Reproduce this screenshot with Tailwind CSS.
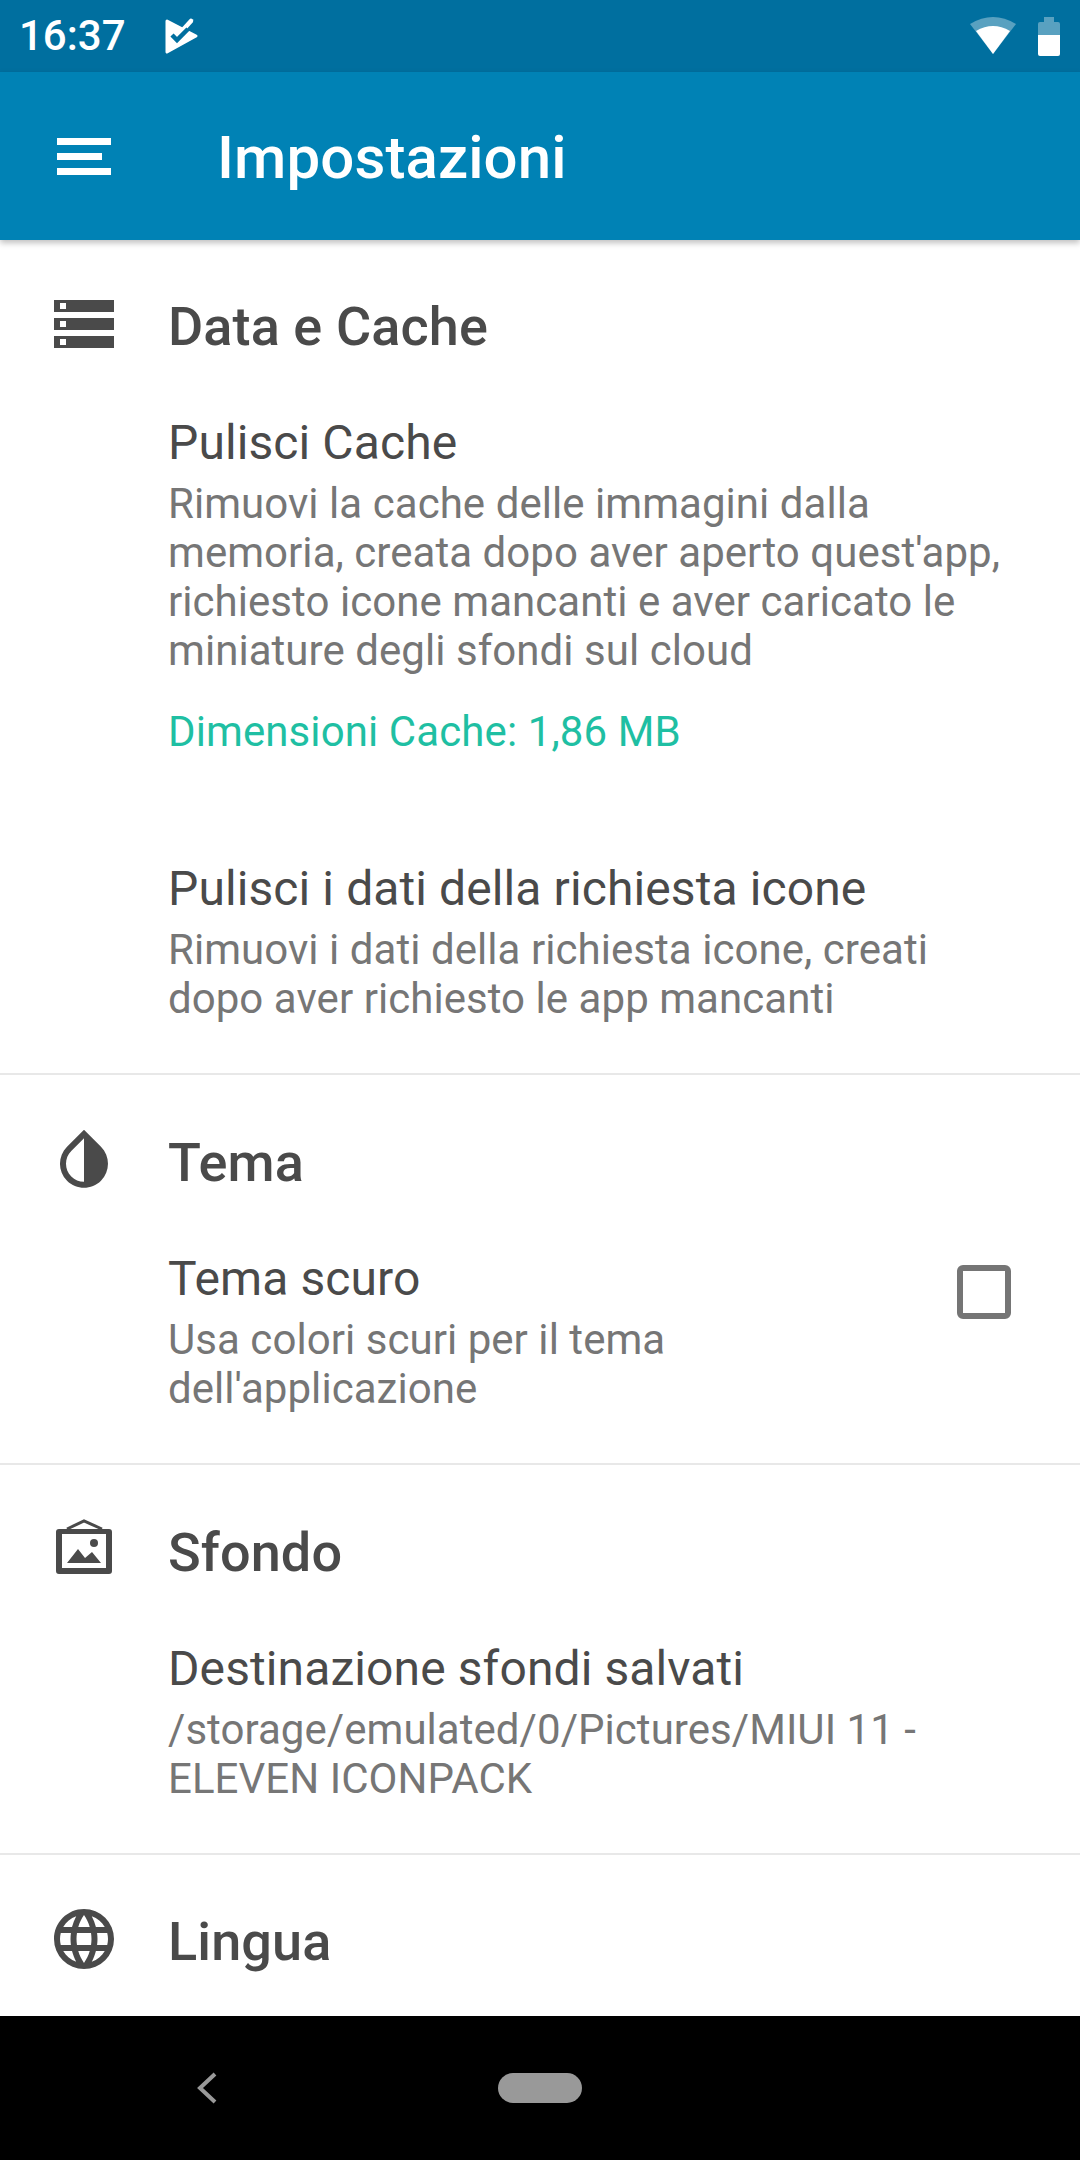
<!DOCTYPE html>
<html lang="it">

<head>
    <meta charset="UTF-8">
    <meta name="viewport" content="width=device-width, initial-scale=1.0">
    <title>Impostazioni</title>
    <script src="https://cdn.jsdelivr.net/npm/@tailwindcss/browser@4"></script>
</head>

<body class="bg-white font-['Roboto',sans-serif]">
    <div class="w-[1080px] h-[2160px] flex flex-col overflow-hidden">
        <!-- status bar -->
        <div class="h-[72px] shrink-0 bg-[#006f9f] flex items-center text-white relative">
            <span class="ml-[19px] text-[42px] leading-none font-medium">16:37</span>
            <svg class="ml-[37px]" width="36" height="40" viewBox="0 0 36 40">
                <path d="M4 5 L33 20 L4 36 Z" fill="#fff" stroke="#fff" stroke-width="3" stroke-linejoin="round" />
                <path d="M28 5 L18 16" fill="none" stroke="#fff" stroke-width="4.5" stroke-linecap="round" />
                <path d="M9 19 L14 24 L25 13" fill="none" stroke="#006f9f" stroke-width="4.5" />
            </svg>
            <svg class="ml-auto mr-[21px]" width="48" height="40" viewBox="0 0 48 40">
                <path d="M1 8 Q24 -6 47 8 L24 38 Z" fill="#fff" fill-opacity="0.35" />
                <path d="M7 15 Q24 5 41 15 L24 38 Z" fill="#fff" />
            </svg>
            <div class="mr-[20px] w-[22px] h-[39px] flex flex-col items-center">
                <div class="w-[10px] h-[5px] bg-white/35 shrink-0"></div>
                <div class="w-full h-[13px] bg-white/35 rounded-t-[2px] shrink-0"></div>
                <div class="w-full h-[21px] bg-white rounded-b-[2px] shrink-0"></div>
            </div>
        </div>

        <!-- app bar -->
        <div class="h-[168px] shrink-0 bg-[#0082b5] flex items-center text-white shadow-[0_3px_6px_rgba(0,0,0,0.25)] relative z-10">
            <div class="ml-[57px] w-[54px] flex flex-col gap-[8px]">
                <div class="h-[7px] w-[54px] bg-white"></div>
                <div class="h-[7px] w-[45px] bg-white"></div>
                <div class="h-[7px] w-[54px] bg-white"></div>
            </div>
            <h1 class="ml-[106px] pt-[4px] text-[60px] leading-none font-medium tracking-[0.1px]">Impostazioni</h1>
        </div>

        <div class="flex-1 overflow-hidden">
            <!-- Data e Cache -->
            <section class="h-[835px] pt-[48px] border-b-2 border-[#e8e8e8]">
                <div class="flex items-center h-[72px]">
                    <svg class="ml-[48px] shrink-0" width="72" height="72" viewBox="0 0 24 24" fill="#4a4a4a">
                        <path d="M2 20h20v-4H2v4zm2-3h2v2H4v-2zM2 4v4h20V4H2zm4 3H4V5h2v2zm-4 7h20v-4H2v4zm2-3h2v2H4v-2z" />
                    </svg>
                    <h2 class="ml-[48px] pt-[5px] text-[54px] font-medium text-[#4a4a4a] leading-none tracking-[0.1px]">Data e Cache</h2>
                </div>
                <div class="ml-[168px] pr-[60px] mt-[55px]">
                    <h3 class="text-[48px] leading-[56px] text-[#4a4a4a] tracking-[0.1px]">Pulisci Cache</h3>
                    <p class="mt-[8px] text-[42px] leading-[49px] text-[#767676] tracking-[0.05px]">Rimuovi la cache delle immagini dalla memoria, creata dopo aver aperto quest'app, richiesto icone mancanti e aver caricato le miniature degli sfondi sul cloud</p>
                    <p class="mt-[32px] text-[42px] leading-[49px] text-[#1fbfa3] tracking-[0.1px]">Dimensioni Cache: 1,86 MB</p>
                    <h3 class="mt-[105px] text-[48px] leading-[56px] text-[#4a4a4a] tracking-[0.1px]">Pulisci i dati della richiesta icone</h3>
                    <p class="mt-[8px] text-[42px] leading-[49px] text-[#767676] tracking-[0.05px]">Rimuovi i dati della richiesta icone, creati dopo aver richiesto le app mancanti</p>
                </div>
            </section>

            <!-- Tema -->
            <section class="h-[390px] pt-[48px] border-b-2 border-[#e8e8e8]">
                <div class="flex items-center h-[72px]">
                    <svg class="ml-[48px] shrink-0" width="72" height="72" viewBox="0 0 24 24" fill="#4a4a4a">
                        <path d="M17.66 7.93L12 2.27 6.34 7.93c-3.12 3.12-3.12 8.19 0 11.31C7.9 20.8 9.95 21.58 12 21.58c2.05 0 4.1-.78 5.66-2.34 3.12-3.12 3.12-8.19 0-11.31zM12 19.59c-1.6 0-3.11-.62-4.24-1.76C6.62 16.69 6 15.19 6 13.59s.62-3.11 1.76-4.24L12 5.1v14.49z" />
                    </svg>
                    <h2 class="ml-[48px] pt-[8px] text-[54px] font-medium text-[#4a4a4a] leading-none tracking-[0.1px]">Tema</h2>
                </div>
                <div class="ml-[168px] mt-[56px] flex items-start">
                    <div class="w-[600px]">
                        <h3 class="text-[48px] leading-[56px] text-[#4a4a4a] tracking-[0.1px]">Tema scuro</h3>
                        <p class="mt-[8px] text-[42px] leading-[49px] text-[#767676] tracking-[0.05px]">Usa colori scuri per il tema dell'applicazione</p>
                    </div>
                    <div class="ml-[189px] mt-[14px] w-[54px] h-[54px] border-[6px] border-[#757575] rounded-[6px]"></div>
                </div>
            </section>

            <!-- Sfondo -->
            <section class="h-[390px] pt-[48px] border-b-2 border-[#e8e8e8]">
                <div class="flex items-center h-[72px]">
                    <svg class="ml-[48px] shrink-0" width="72" height="72" viewBox="0 0 72 72" fill="#4a4a4a">
                        <path fill-rule="evenodd" d="M11 16H61a3 3 0 0 1 3 3V58a3 3 0 0 1-3 3H11a3 3 0 0 1-3-3V19a3 3 0 0 1 3-3ZM14 21V55H58V21Z" />
                        <path d="M19 16 L36 8 L54 16" fill="none" stroke="#4a4a4a" stroke-width="3" />
                        <circle cx="46" cy="30" r="4" />
                        <path d="M19 50 L30 36 L37 45 L44 39 L53 50 Z" />
                    </svg>
                    <h2 class="ml-[48px] pt-[8px] text-[54px] font-medium text-[#4a4a4a] leading-none tracking-[0.1px]">Sfondo</h2>
                </div>
                <div class="ml-[168px] pr-[60px] mt-[56px]">
                    <h3 class="text-[48px] leading-[56px] text-[#4a4a4a] tracking-[0.1px]">Destinazione sfondi salvati</h3>
                    <p class="mt-[8px] text-[42px] leading-[49px] text-[#767676] tracking-[0.05px]">/storage/emulated/0/Pictures/MIUI 11 - ELEVEN ICONPACK</p>
                </div>
            </section>

            <!-- Lingua -->
            <section class="pt-[48px]">
                <div class="flex items-center h-[72px]">
                    <svg class="ml-[48px] shrink-0" width="72" height="72" viewBox="0 0 24 24" fill="#4a4a4a">
                        <path d="M16.36,14C16.44,13.34 16.5,12.68 16.5,12C16.5,11.32 16.44,10.66 16.36,10H19.74C19.9,10.64 20,11.31 20,12C20,12.69 19.9,13.36 19.74,14M14.59,19.56C15.19,18.45 15.65,17.25 15.97,16H18.92C17.96,17.65 16.43,18.93 14.59,19.56M14.34,14H9.66C9.56,13.34 9.5,12.68 9.5,12C9.5,11.32 9.56,10.65 9.66,10H14.34C14.43,10.65 14.5,11.32 14.5,12C14.5,12.68 14.43,13.34 14.34,14M12,19.96C11.17,18.76 10.5,17.43 10.09,16H13.91C13.5,17.43 12.83,18.76 12,19.96M8,8H5.08C6.03,6.34 7.57,5.06 9.4,4.44C8.8,5.55 8.35,6.75 8,8M5.08,16H8C8.35,17.25 8.8,18.45 9.4,19.56C7.57,18.93 6.03,17.65 5.08,16M4.26,14C4.1,13.36 4,12.69 4,12C4,11.31 4.1,10.64 4.26,10H7.64C7.56,10.66 7.5,11.32 7.5,12C7.5,12.68 7.56,13.34 7.64,14M12,4.03C12.83,5.23 13.5,6.57 13.91,8H10.09C10.5,6.57 11.17,5.23 12,4.03M18.92,8H15.97C15.65,6.75 15.19,5.55 14.59,4.44C16.43,5.07 17.96,6.34 18.92,8M12,2C6.47,2 2,6.5 2,12A10,10 0 0,0 12,22A10,10 0 0,0 22,12A10,10 0 0,0 12,2Z" />
                    </svg>
                    <h2 class="ml-[48px] pt-[6px] text-[54px] font-medium text-[#4a4a4a] leading-none tracking-[0.1px]">Lingua</h2>
                </div>
            </section>
        </div>

        <!-- nav bar -->
        <div class="h-[144px] shrink-0 bg-black flex items-center">
            <svg class="ml-[196px]" width="22" height="34" viewBox="0 0 22 34">
                <path d="M19 3 L4 17 L19 31" fill="none" stroke="#999" stroke-width="4" />
            </svg>
            <div class="ml-[280px] w-[84px] h-[30px] rounded-full bg-[#999]"></div>
        </div>
    </div>
</body>

</html>
